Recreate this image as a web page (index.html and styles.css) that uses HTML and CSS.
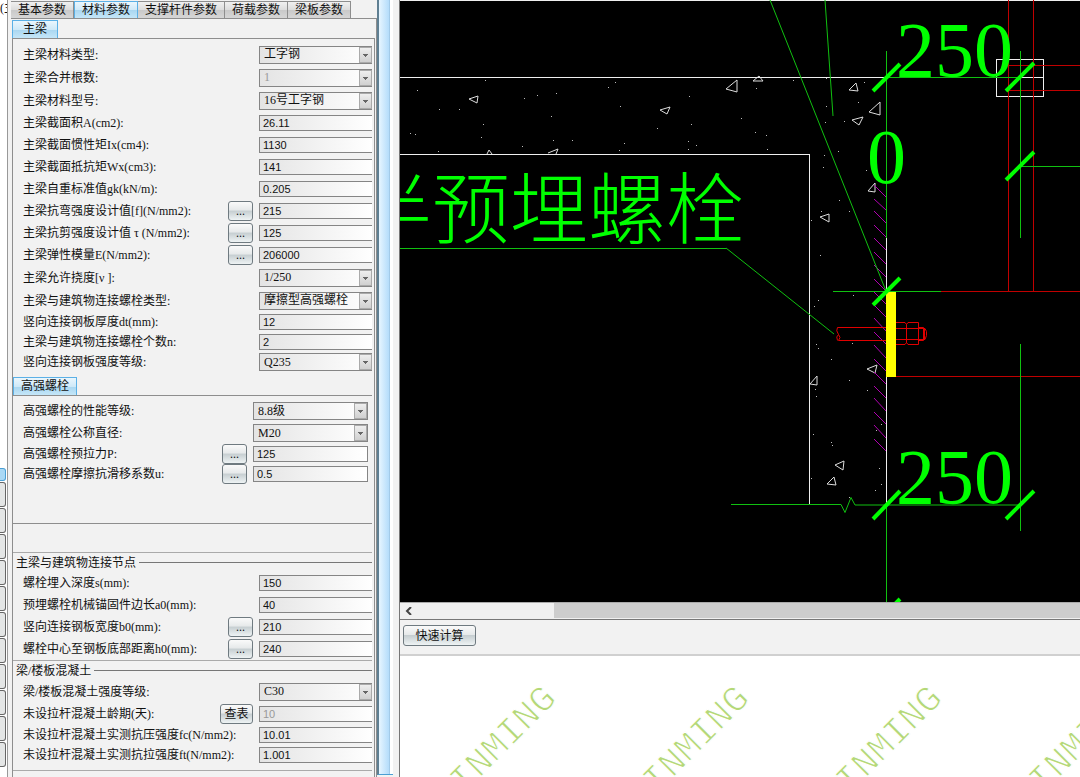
FILE: index.html
```
<!DOCTYPE html>
<html lang="zh-CN">
<head>
    <meta charset="UTF-8">
    <meta name="viewport" content="width=device-width, initial-scale=1.0">
    <title>材料参数</title>

    <link rel="stylesheet" href="styles.css">
</head>
<body>

<div class="strip">
    <div class="strip-text">(主</div>
    <div class="strip-buttons">
        <button class="strip-button active" aria-label="1"></button>
        <button class="strip-button" aria-label="2"></button>
        <button class="strip-button" aria-label="3"></button>
        <button class="strip-button" aria-label="4"></button>
        <button class="strip-button" aria-label="5"></button>
        <button class="strip-button" aria-label="6"></button>
        <button class="strip-button" aria-label="7"></button>
        <button class="strip-button" aria-label="8"></button>
        <button class="strip-button" aria-label="9"></button>
        <button class="strip-button" aria-label="10"></button>
        <button class="strip-button" aria-label="11"></button>
        <button class="strip-button" aria-label="12"></button>
    </div>
</div>

<div class="params">
    <div class="tabs">
        <button class="tab">基本参数</button>
        <button class="tab active">材料参数</button>
        <button class="tab">支撑杆件参数</button>
        <button class="tab">荷载参数</button>
        <button class="tab">梁板参数</button>
    </div>

    <div class="page">
        <div class="sub-tabs first">
            <button class="tab active">主梁</button>
        </div>

        <div class="page-body">
            <div class="rows beam">
                <div class="row tall"><label for="type">主梁材料类型:</label><select id="type"><option>工字钢</option></select></div>
                <div class="row tall"><label for="count">主梁合并根数:</label><select id="count" disabled><option>1</option></select></div>
                <div class="row tall"><label for="model">主梁材料型号:</label><select id="model"><option>16号工字钢</option></select></div>
                <div class="row"><label for="area">主梁截面积A(cm2):</label><input id="area" type="text" value="26.11"></div>
                <div class="row"><label for="ix">主梁截面惯性矩Ix(cm4):</label><input id="ix" type="text" value="1130"></div>
                <div class="row"><label for="wx">主梁截面抵抗矩Wx(cm3):</label><input id="wx" type="text" value="141"></div>
                <div class="row"><label for="gk">主梁自重标准值gk(kN/m):</label><input id="gk" type="text" value="0.205"></div>
                <div class="row"><label for="f">主梁抗弯强度设计值[f](N/mm2):</label><button class="btn more">...</button><input id="f" type="text" value="215"></div>
                <div class="row"><label for="tau">主梁抗剪强度设计值 τ (N/mm2):</label><button class="btn more">...</button><input id="tau" type="text" value="125"></div>
                <div class="row"><label for="e">主梁弹性模量E(N/mm2):</label><button class="btn more">...</button><input id="e" type="text" value="206000"></div>
                <div class="row tall"><label for="v">主梁允许挠度[ν ]:</label><select id="v"><option>1/250</option></select></div>
                <div class="row tall"><label for="bolt">主梁与建筑物连接螺栓类型:</label><select id="bolt"><option>摩擦型高强螺栓</option></select></div>
                <div class="row short"><label for="dt">竖向连接钢板厚度dt(mm):</label><input id="dt" type="text" value="12"></div>
                <div class="row short"><label for="n">主梁与建筑物连接螺栓个数n:</label><input id="n" type="text" value="2"></div>
                <div class="row short"><label for="grade">竖向连接钢板强度等级:</label><select id="grade"><option>Q235</option></select></div>
            </div>

            <div class="sub-tabs">
                <button class="tab active">高强螺栓</button>
            </div>
            <div class="rows bolts">
                <div class="row"><label for="perf">高强螺栓的性能等级:</label><select id="perf"><option>8.8级</option></select></div>
                <div class="row"><label for="dia">高强螺栓公称直径:</label><select id="dia"><option>M20</option></select></div>
                <div class="row short"><label for="p">高强螺栓预拉力P:</label><button class="btn more">...</button><input id="p" type="text" value="125"></div>
                <div class="row short"><label for="u">高强螺栓摩擦抗滑移系数u:</label><button class="btn more">...</button><input id="u" type="text" value="0.5"></div>
            </div>

            <div class="group">
                <div class="group-title">主梁与建筑物连接节点</div>
                <div class="rows">
                    <div class="row"><label for="s">螺栓埋入深度s(mm):</label><input id="s" type="text" value="150"></div>
                    <div class="row"><label for="a0">预埋螺栓机械锚固件边长a0(mm):</label><input id="a0" type="text" value="40"></div>
                    <div class="row"><label for="b0">竖向连接钢板宽度b0(mm):</label><button class="btn more">...</button><input id="b0" type="text" value="210"></div>
                    <div class="row"><label for="h0">螺栓中心至钢板底部距离h0(mm):</label><button class="btn more">...</button><input id="h0" type="text" value="240"></div>
                </div>
            </div>

            <div class="group last">
                <div class="group-title">梁/楼板混凝土</div>
                <div class="rows">
                    <div class="row tall"><label for="c">梁/楼板混凝土强度等级:</label><select id="c"><option>C30</option></select></div>
                    <div class="row"><label for="age">未设拉杆混凝土龄期(天):</label><button class="btn lookup">查表</button><input id="age" type="text" value="10" disabled></div>
                    <div class="row short"><label for="fc">未设拉杆混凝土实测抗压强度fc(N/mm2):</label><input id="fc" type="text" value="10.01"></div>
                    <div class="row short"><label for="ft">未设拉杆混凝土实测抗拉强度ft(N/mm2):</label><input id="ft" type="text" value="1.001"></div>
                </div>
            </div>
        </div>
    </div>
</div>

<div class="splitter"></div>

<div class="work">
    <div class="canvas">
        <svg class="drawing" viewBox="400 0 680 602" preserveAspectRatio="xMinYMin slice">
            <!-- concrete outline -->
            <g class="white crisp">
                <path d="M400 .5H1080M400 77.5H886M400 154.5H809.5V504M886.5 238V504M996.5 59.500h47v37h-47zM1020 77.500h23"/>
            </g>
            <!-- aggregate -->
            <g class="stone">
                <path d="M469 99l9-3-1 7zM660 110l10-3-3 7zM726 89l11-9v12zM753 81l6-5 4 5zM849 90l7-7 2 8zM852 120l11-3-4 8zM869 112l11-10v13zM868 191l7-8v9zM820 217l9-3v8zM487 154l2-4 3 4M548 153l10-4-2 5M867 369l10-4-2 8zM810 384l7-8v9zM835 465l9-4-1 9zM827 484l7-7 2 8z"/>
            </g>
            <g class="dots crisp">
                <path d="M417 90.5h1M485 80.5h1M439 109.5h1M459 109.5h1M524 98.5h1M537 95.5h1M556 93.5h1M483 124.5h1M481 137.5h1M410 133.5h1M415 134.5h1M438 151.5h1M551 116.5h1M553 140.5h1M572 140.5h1M522 146.5h1M608 87.5h1M615 82.5h1M620 106.5h1M657 128.5h1M691 124.5h1M689 96.5h1M688 141.5h1M688 149.5h1M696 145.5h1M624 143.5h1M619 150.5h1M756 88.5h1M793 80.5h1M741 118.5h1M755 132.5h1M766 135.5h1M767 149.5h1M826 78.5h1M858 102.5h1M826 106.5h1M864 82.5h1M844 121.5h1M825 122.5h1M838 151.5h1M824 155.5h1M823 167.5h1M866 170.5h1M839 200.5h1M849 211.5h1M821 211.5h1M811 220.5h1M820 255.5h1M853 295.5h1M818 300.5h1M814 306.5h1M816 344.5h1M818 348.5h1M831 359.5h1M852 343.5h1M849 380.5h1M815 389.5h1M816 396.5h1M867 390.5h1M813 434.5h1M831 442.5h1M832 445.5h1M881 424.5h1M876 430.5h1M879 468.5h1M881 484.5h1M875 490.5h1M811 478.5h1M849 497.5h1"/>
            </g>
            <!-- wall hatch -->
            <path class="hatch" d="M874 185l12 12M874 199l12 11M874 211l12 12M874 225l12 12M874 238l12 12M874 252l12 12M874 265l12 12M874 279l12 12M874 292l12 12M874 305l12 12M874 318l12 13M874 332l12 12M874 345l12 13M874 359l12 12M874 372l12 12M874 386l12 12M874 398l12 13M874 412l12 12M874 425l12 13M874 439l12 12"/>
            <!-- steel beam -->
            <path class="red crisp" d="M1008.5 0V291M1033.5 0V291M1008 65.5h72M1008 90.5h72M941 291.5h139M896 376.5h184"/>
            <path class="bolt" d="M886 327.500H837.500q-2 3 1 7 3 3 0 6H886M837.500 340.500q-2-4 1-6M896 322.500h9l1.500 2v18l-1.500 2h-9M908 322.500h10.500v22H908l-1.500-2v-18zM896 328.500h29l1.500 3v4l-1.500 4h-29M918.500 327.500h5v13h-5M924.500 328v12"/>
            <rect class="plate" x="886" y="291" width="10" height="86"/>
            <!-- leaders and dimensions -->
            <path class="green thin" d="M770 0L886 291M825 0L833 116M726 248L834 334"/>
            <path class="green crisp" d="M400 248.500H726M886.500 51V238M886 77.500H1020M1020.500 51V238M1020 166.500h60M833 291.500H941M1020.500 344V531M886.500 504V602"/>
            <path class="green thin" d="M731 504.500H841l4 8 6-15 4 7.500H1020"/>
            <path class="tick" d="M873 91L900 64M1006 91L1034 63M1006 180L1034 152M873 305L900 278M873 519L900 491M1006 519L1034 491M873 626L900 599"/>
            <g class="dim-text">
                <text x="896" y="76">250</text>
                <text x="867" y="183">0</text>
                <text x="896" y="503">250</text>
                <text x="354" y="238">半预埋螺栓</text>
            </g>
        </svg>
    </div>
    <div class="scrollbar">
        <button class="scroll-left" aria-label="scroll left">
            <svg viewBox="0 0 8 8" width="8" height="8"><path d="M6 0L2 4l4 4"/></svg>
        </button>
        <div class="thumb"></div>
    </div>
    <div class="toolbar">
        <button class="btn calc">快速计算</button>
    </div>
    <div class="output">
        <svg class="watermark" viewBox="400 656 680 121" preserveAspectRatio="xMinYMin slice">
            <text transform="translate(558 700) rotate(-45)">INMING</text>
            <text transform="translate(751 700) rotate(-45)">INMING</text>
            <text transform="translate(944 700) rotate(-45)">INMING</text>
            <text transform="translate(1137 700) rotate(-45)">INMING</text>
        </svg>
    </div>
</div>

</body>
</html>
```

FILE: styles.css
```
* {
    box-sizing: border-box;
}

body {
    margin: 0;
    height: 100vh;
    display: flex;
    overflow: hidden;
    background: #f2f2f2;
    color: #111;
    font-family: "Liberation Serif", "Noto Sans CJK SC", sans-serif;
    font-size: 12px;
    line-height: 16px;
}

button,
input,
select {
    font-family: inherit;
    font-size: 12px;
    line-height: 16px;
    color: #111;
    margin: 0;
}

/* left tool strip */
.strip {
    flex: 0 0 8px;
    display: flex;
    flex-direction: column;
    justify-content: space-between;
    background: white;
    border-right: 1px solid #999;
    overflow: hidden;
}

.strip-text {
    white-space: nowrap;
}

.strip-buttons {
    height: 309px;
    overflow: hidden;
}

.strip-button {
    display: block;
    width: 6px;
    height: 25px;
    margin-bottom: 1px;
    padding: 0;
    border: 1px solid #666;
    border-left: none;
    border-radius: 0 3px 3px 0;
    background: #e4e6e6;
}

.strip-button.active {
    height: 13px;
    border-color: #4a9fd4;
    background: #a9d8f5;
}

/* parameter panel */
.params {
    flex: 0 0 369px;
    display: flex;
    flex-direction: column;
    padding: 1px 0 0 3px;
    overflow: hidden;
}

.tabs,
.sub-tabs {
    display: flex;
    flex: none;
}

.tab {
    height: 17px;
    padding: 0 7px;
    border: 1px solid #8e8e8e;
    border-left: none;
    border-bottom: none;
    background: linear-gradient(#f0f0f0, #dcdcdc 50%, #c9c9c9 51%, #d6d6d6);
    white-space: nowrap;
    line-height: 15px;
}

.tab.active {
    border: 1px solid #5bb0e6;
    border-bottom: none;
    background: linear-gradient(#eaf6fd, #cfe9f8 50%, #a9d6f0 51%, #c4e6f8);
}

.page {
    flex: 1;
    display: flex;
    flex-direction: column;
    min-height: 0;
    padding: 1px 1px 0 1px;
    border: 1px solid #8e8e8e;
    border-left: none;
    border-bottom: none;
}

.sub-tabs .tab {
    height: 18px;
}

.sub-tabs.first .tab {
    padding: 0 10px;
}

.page-body {
    flex: 1;
    min-height: 0;
    padding-right: 2px;
    border: 1px solid #8e8e8e;
    border-bottom: none;
    overflow: hidden;
}

.rows {
    padding-left: 10px;
    overflow: hidden;
}

.beam {
    padding-top: 4px;
    padding-bottom: 5px;
}

.row {
    display: flex;
    align-items: center;
    height: 22px;
}

.row.tall {
    height: 23px;
}

.row.short {
    height: 20px;
}

.row label {
    flex: 1;
    white-space: nowrap;
}

.row input,
.row select {
    flex: none;
    width: 113px;
    border: 1px solid #858585;
    border-right: none;
    border-radius: 0;
    background: linear-gradient(90deg, #e4e4e4, #fff);
}

.row input {
    height: 16px;
    padding: 0 3px;
    font-family: "Liberation Sans", sans-serif;
    font-size: 11px;
    line-height: 14px;
}

/* the drop-down arrow is three stacked bars on a small raised box */
.row select {
    appearance: none;
    height: 18px;
    padding: 0 4px;
    line-height: 15px;
    background:
        linear-gradient(#666, #666) right 4px top 7px / 5px 1px no-repeat,
        linear-gradient(#666, #666) right 5px top 8px / 3px 1px no-repeat,
        linear-gradient(#666, #666) right 6px top 9px / 1px 1px no-repeat,
        linear-gradient(#eee, #d0d0d0) right 1px center / 11px 14px no-repeat,
        linear-gradient(#aaa, #aaa) right 0 center / 13px 16px no-repeat,
        linear-gradient(90deg, #e4e4e4, #fff);
}

.row input:disabled,
.row select:disabled {
    color: #999;
    opacity: 1;
}

.btn {
    border: 1px solid #6f7a80;
    border-radius: 3px;
    padding: 0;
    background: linear-gradient(#fafafa, #e6e9ea 45%, #c6ced1 50%, #eef3f4);
}

.more {
    width: 25px;
    height: 20px;
    margin-right: 6px;
}

.lookup {
    width: 33px;
    height: 20px;
    margin-right: 6px;
}

.bolts {
    height: 129px;
    padding-top: 4px;
    padding-right: 4px;
    border-top: 1px solid #8e8e8e;
    border-bottom: 1px solid #8e8e8e;
}

.bolts .row input,
.bolts .row select {
    width: 115px;
    border-right: 1px solid #858585;
}

.group {
    margin-top: 28px;
    border-top: 1px solid #aaa;
}

.group.last {
    margin-top: 0;
    padding-bottom: 5px;
    border-bottom: 1px solid #aaa;
}

.group-title {
    display: flex;
    align-items: center;
    gap: 3px;
    height: 19px;
    padding-left: 3px;
}

.group-title::after {
    content: "";
    flex: 1;
    height: 1px;
    background: #777;
}

/* splitter between the panel and the drawing */
.splitter {
    flex: 0 0 16px;
    margin-bottom: 2px;
    border-left: 2px solid #5f7f92;
    border-bottom: 1px solid #4a9fd4;
    background: linear-gradient(90deg, #e6f5ff, #b5ddfb 70%, #8fb8d6 80%, #fff 81%);
}

.work {
    flex: 1;
    min-width: 0;
    display: flex;
    flex-direction: column;
    border-left: 1px solid #777;
    margin-left: 6px;
}

.canvas {
    flex: 1;
    min-height: 0;
    background: black;
    overflow: hidden;
}

.drawing {
    display: block;
    width: 100%;
    height: 100%;
}

.drawing path {
    fill: none;
    stroke-width: 1;
}

.crisp {
    shape-rendering: crispEdges;
}

.white path {
    stroke: #eee;
}

.stone path {
    stroke: #ddd;
}

.dots path {
    stroke: #bbb;
}

.drawing .hatch {
    stroke: #b000b0;
}

.drawing .red {
    stroke: #c00000;
}

.drawing .bolt {
    stroke: #e00000;
}

.plate {
    fill: #ff0;
}

.drawing .green {
    stroke: #10c010;
}

.drawing .tick {
    stroke: #0f0;
    stroke-width: 4;
}

.dim-text {
    fill: #0f0;
    font-size: 78px;
    font-weight: 300;
}

.scrollbar {
    flex: 0 0 18px;
    display: flex;
    background: #f0f0f0;
    border-top: 1px solid #aaa;
    border-bottom: 1px solid #777;
}

.scroll-left {
    width: 17px;
    padding: 0;
    margin-right: 137px;
    border: none;
    background: none;
}

.scroll-left path {
    fill: none;
    stroke: #444;
    stroke-width: 2;
}

.thumb {
    flex: 1;
    margin-bottom: 1px;
    background: #cdcdcd;
}

.toolbar {
    flex: 0 0 36px;
    padding: 5px 3px;
    border-bottom: 2px solid #d0d0d0;
}

.calc {
    display: block;
    width: 73px;
    height: 21px;
}

.output {
    flex: 0 0 121px;
    background: white;
}

.watermark {
    display: block;
    width: 100%;
    height: 100%;
}

/* the white stroke thins the letters down */
.watermark text {
    font-family: "Liberation Mono", monospace;
    font-size: 37px;
    text-anchor: end;
    fill: #b4d878;
    stroke: white;
    stroke-width: 1;
}
```
